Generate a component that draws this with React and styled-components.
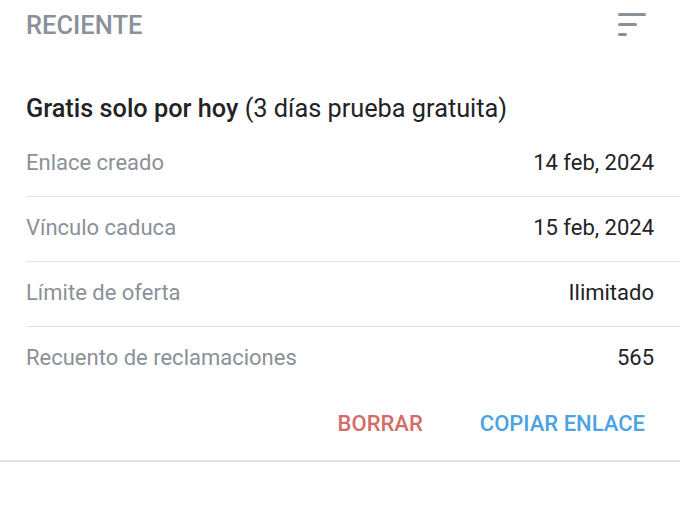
import React from "react";
import styled, { createGlobalStyle } from "styled-components";

const GRAY = "#8b9199";
const INK = "#222326";

const ROWS = [
  { label: "Enlace creado", value: "14 feb, 2024" },
  { label: "Vínculo caduca", value: "15 feb, 2024" },
  { label: "Límite de oferta", value: "Ilimitado" },
  { label: "Recuento de reclamaciones", value: "565" },
];

const GlobalStyle = createGlobalStyle`
  body {
    margin: 0;
    background: #fff;
    font-family: Roboto, "Noto Sans", sans-serif;
  }
`;

export default function App() {
  return (
    <Page>
      <GlobalStyle />
      <Header>
        <HeaderTitle>RECIENTE</HeaderTitle>
        <SortIcon />
      </Header>
      <Card>
        <OfferTitle>
          <strong>Gratis solo por hoy</strong> (3 días prueba gratuita)
        </OfferTitle>
        {ROWS.map((row, i) => (
          <Row key={row.label} last={i === ROWS.length - 1}>
            <Label>{row.label}</Label>
            <Value>{row.value}</Value>
          </Row>
        ))}
        <Actions>
          <ActionButton color="#d56c68">BORRAR</ActionButton>
          <ActionButton color="#4aa3e2">COPIAR ENLACE</ActionButton>
        </Actions>
      </Card>
    </Page>
  );
}

const SortIcon = () => (
  <svg width="32" height="30" viewBox="0 0 32 30">
    <rect x="2" y="3" width="28" height="3" rx="1.5" fill={GRAY} />
    <rect x="2" y="13" width="19" height="3" rx="1.5" fill={GRAY} />
    <rect x="2" y="23" width="9" height="3" rx="1.5" fill={GRAY} />
  </svg>
);

const Page = styled.div`
  width: 680px;
  height: 524px;
  background: #fff;
`;

const Header = styled.div`
  height: 50px;
  padding: 0 32px 0 26px;
  display: flex;
  align-items: center;
  justify-content: space-between;
`;

const HeaderTitle = styled.div`
  font-size: 25.5px;
  font-weight: 500;
  color: ${GRAY};
`;

const Card = styled.div`
  padding-top: 37px;
  border-bottom: 2px solid #e2e2e2;
`;

const OfferTitle = styled.div`
  padding: 0 26px 2px;
  height: 45px;
  box-sizing: border-box;
  display: flex;
  align-items: center;
  font-size: 25.3px;
  color: ${INK};
  white-space: pre;

  strong {
    font-weight: 500;
  }
`;

const Row = styled.div`
  margin-left: 26px;
  padding: 0 26px 4px 0;
  height: 65px;
  box-sizing: border-box;
  display: flex;
  align-items: center;
  justify-content: space-between;
  border-bottom: ${(p) => (p.last ? "none" : "1px solid #e3e3e3")};
`;

const Label = styled.span`
  font-size: 22px;
  color: ${GRAY};
`;

const Value = styled.span`
  font-size: 22px;
  color: ${INK};
`;

const Actions = styled.div`
  height: 68px;
  padding: 0 26px 6px 0;
  box-sizing: border-box;
  display: flex;
  align-items: center;
  justify-content: flex-end;
  gap: 39px;
`;

const ActionButton = styled.button`
  background: none;
  border: none;
  padding: 8px 9px;
  font-family: Roboto, "Noto Sans", sans-serif;
  font-size: 22px;
  font-weight: 500;
  color: ${(p) => p.color};
  cursor: pointer;
`;
